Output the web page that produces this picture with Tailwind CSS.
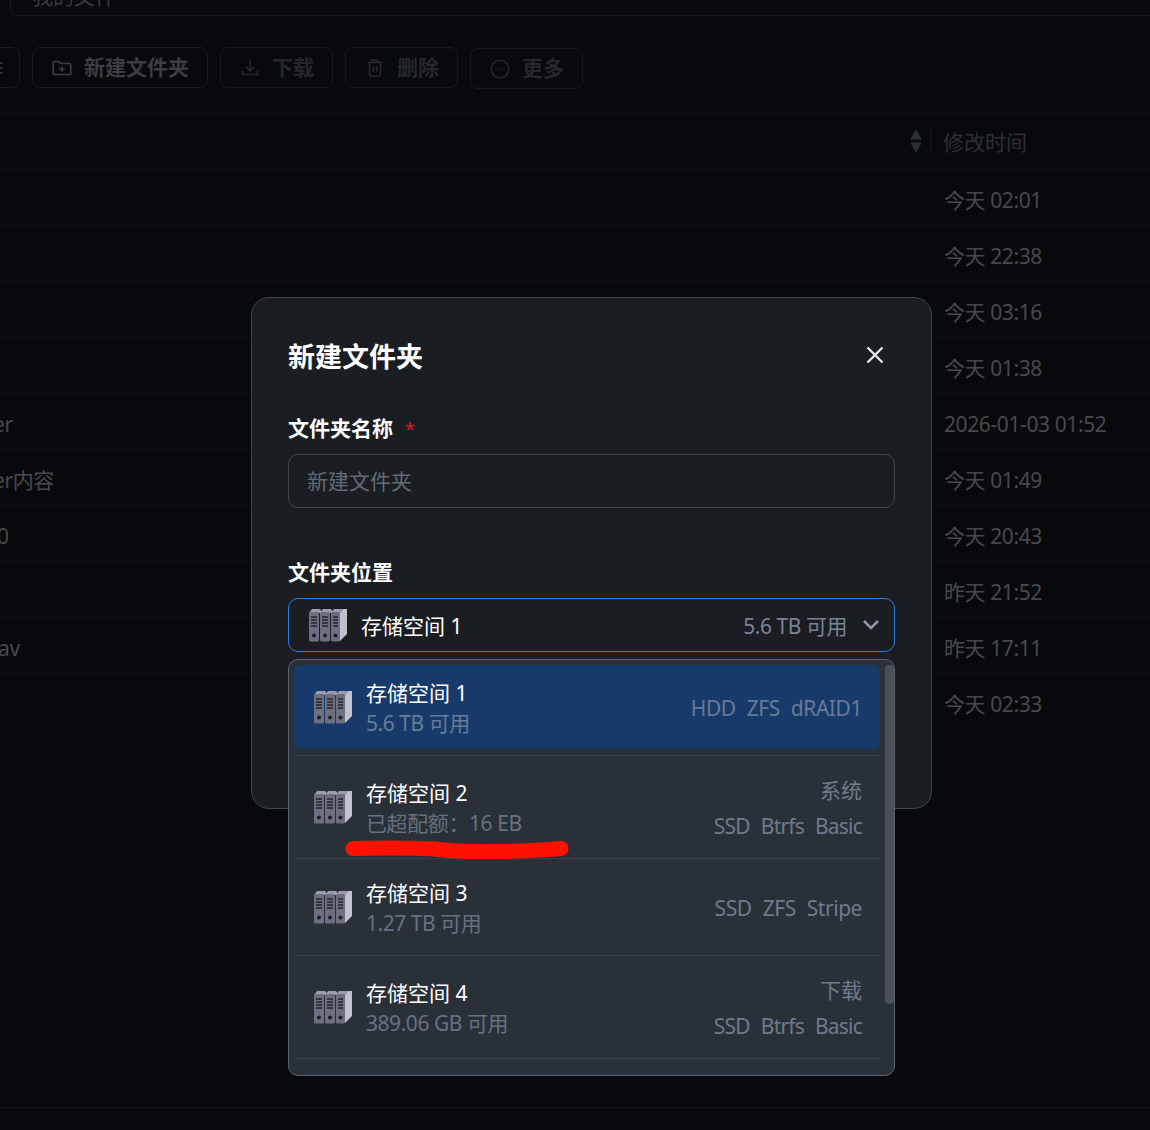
<!DOCTYPE html>
<html lang="zh-CN">
<head>
  <meta charset="UTF-8" />
  <title>新建文件夹</title>
  <script src="https://cdn.jsdelivr.net/npm/@tailwindcss/browser@4"></script>
</head>
<body class="bg-[#08090c] text-white font-['Noto_Sans','Noto_Sans_CJK_SC',sans-serif]">
  <svg class="hidden">
    <symbol id="vol" viewBox="0 0 38 34">
      <path d="M31 5l3-4h4v25l-7 7z" fill="#bfc2cc"/>
      <path d="M0 5l3-4h8l3 4zM11 5l3-4h8l3 4zM22 5l3-4h9l-3 4z" fill="#9a9dab"/>
      <rect x="0" y="4" width="10" height="29.500" rx="1.500" fill="#6c6f80"/>
      <rect x="11" y="4" width="10" height="29.500" rx="1.500" fill="#6c6f80"/>
      <rect x="22" y="4" width="9" height="29.500" rx="1.500" fill="#6c6f80"/>
      <path d="M2 9h6M2 12h6M2 15h6M2 18h6M13 9h6M13 12h6M13 15h6M13 18h6M24 9h5M24 12h5M24 15h5M24 18h5" stroke="#23252e" stroke-width="1.500"/>
      <circle cx="5" cy="27.500" r="2" fill="#1d1f27"/>
      <circle cx="16" cy="27.500" r="2" fill="#1d1f27"/>
      <circle cx="26.500" cy="27.500" r="2" fill="#1d1f27"/>
    </symbol>
  </svg>

  <div class="relative w-[1150px] h-[1130px] overflow-hidden text-[21px]">
    <!-- dimmed page behind the dialog -->
    <div class="h-[1108px] border-b border-[#131418]">
      <div class="ml-[10px] h-[16px] border border-t-0 border-r-0 border-[#17181c] rounded-bl-lg pl-[21px] overflow-hidden">
        <div class="-mt-[18px] text-[#3a3b3e] leading-[28px]">我的文件</div>
      </div>

      <div class="flex gap-3 h-[98px] pt-[31px] -ml-[20px] border-b border-[#101115] text-[21px]">
        <div class="flex items-center justify-end pr-[16px] w-[40px] h-[41px] border border-[#1a1b20] rounded-lg">
          <svg class="w-[4px] h-[14px]" viewBox="0 0 4 14" stroke="#2c2d30" stroke-width="2"><path d="M0 2h4M0 7h4M0 12h4"/></svg>
        </div>
        <div class="flex items-center gap-[11px] w-[176px] h-[41px] pl-[18px] border border-[#1a1b20] rounded-lg font-bold text-[#3c3d40]">
          <svg class="w-[22px] h-[22px]" viewBox="0 0 20 20" fill="none" stroke="#404145" stroke-width="1.400"><path d="M2 5a1 1 0 0 1 1-1h4l2 2h8a1 1 0 0 1 1 1v8a1 1 0 0 1-1 1H3a1 1 0 0 1-1-1zM10 8.500v5M7.500 11h5"/></svg>
          <span class="pt-px">新建文件夹</span>
        </div>
        <div class="flex items-center gap-[11px] w-[113px] h-[41px] pl-[18px] border border-[#17181c] rounded-lg font-bold text-[#25272b]">
          <svg class="w-[22px] h-[22px]" viewBox="0 0 20 20" fill="none" stroke="#26282c" stroke-width="1.400"><path d="M10 3v9M6.500 9l3.500 3.500L13.500 9M3 12v4h14v-4"/></svg>
          <span class="pt-px">下载</span>
        </div>
        <div class="flex items-center gap-[11px] w-[113px] h-[41px] pl-[18px] border border-[#17181c] rounded-lg font-bold text-[#25272b]">
          <svg class="w-[22px] h-[22px]" viewBox="0 0 20 20" fill="none" stroke="#26282c" stroke-width="1.400"><path d="M3 5h14M7.500 5V3h5v2M5 5v11a1.500 1.500 0 0 0 1.500 1.500h7A1.500 1.500 0 0 0 15 16V5M8.500 8.500v5M11.500 8.500v5"/></svg>
          <span class="pt-px">删除</span>
        </div>
        <div class="flex items-center gap-[11px] w-[113px] h-[41px] mt-px pl-[18px] border border-[#17181c] rounded-lg font-bold text-[#25272b]">
          <svg class="w-[22px] h-[22px]" viewBox="0 0 20 20" fill="none" stroke="#26282c" stroke-width="1.400"><circle cx="10" cy="10" r="8"/><path d="M6 10h1M9.500 10h1M13 10h1"/></svg>
          <span class="pt-px">更多</span>
        </div>
      </div>

      <div class="relative h-[56px] flex items-center pl-[943px] pt-[3px] border-b border-[#101115] text-[#2e2f33]">
        <svg class="absolute left-[910px] top-[15px] w-[12px] h-[24px]" viewBox="0 0 12 24" fill="#2b2f37"><path d="M6 1l5 9H1zM6 23l-5-9h10z" stroke="#2b2f37" stroke-linejoin="round"/></svg>
        <div class="absolute left-[930px] top-[15px] w-px h-[25px] bg-[#15161a]"></div>
        修改时间
      </div>
      <div class="h-[56px] flex items-center pl-[944px] pt-[6px] tracking-[-0.4px] border-b border-[#0e0f13] text-[#48494b]">今天 02:01</div>
      <div class="h-[56px] flex items-center pl-[944px] pt-[6px] tracking-[-0.4px] border-b border-[#0e0f13] text-[#48494b]">今天 22:38</div>
      <div class="h-[56px] flex items-center pl-[944px] pt-[6px] tracking-[-0.4px] border-b border-[#0e0f13] text-[#48494b]">今天 03:16</div>
      <div class="h-[56px] flex items-center pl-[944px] pt-[6px] tracking-[-0.4px] border-b border-[#0e0f13] text-[#48494b]">今天 01:38</div>
      <div class="relative h-[56px] flex items-center pl-[944px] pt-[6px] tracking-[-0.4px] border-b border-[#0e0f13] text-[#48494b]"><span class="absolute left-[-7px]">er</span>2026-01-03 01:52</div>
      <div class="relative h-[56px] flex items-center pl-[944px] pt-[6px] tracking-[-0.4px] border-b border-[#0e0f13] text-[#48494b]"><span class="absolute left-[-7px]">er内容</span>今天 01:49</div>
      <div class="relative h-[56px] flex items-center pl-[944px] pt-[6px] tracking-[-0.4px] border-b border-[#0e0f13] text-[#48494b]"><span class="absolute left-[-3px]">0</span>今天 20:43</div>
      <div class="h-[56px] flex items-center pl-[944px] pt-[6px] tracking-[-0.4px] border-b border-[#0e0f13] text-[#48494b]">昨天 21:52</div>
      <div class="relative h-[56px] flex items-center pl-[944px] pt-[6px] tracking-[-0.4px] border-b border-[#0e0f13] text-[#48494b]"><span class="absolute left-[-2px]">av</span>昨天 17:11</div>
      <div class="h-[56px] flex items-center pl-[944px] pt-[6px] tracking-[-0.4px] text-[#48494b]">今天 02:33</div>
    </div>

    <!-- dialog -->
    <div class="absolute left-[251px] top-[297px] w-[681px] h-[512px] bg-[#1a1d22] border border-[#41454d] rounded-[18px] px-[36px]">
      <div class="flex items-center justify-between h-[118px] pr-[2px]">
        <h2 class="text-[27px] font-bold">新建文件夹</h2>
        <svg class="w-[22px] h-[22px] mr-[7px] -mt-[4px]" viewBox="0 0 22 22" fill="none" stroke="#e5e7eb" stroke-width="2.400"><path d="M3.500 3.500l15 15M18.500 3.500l-15 15"/></svg>
      </div>
      <div class="flex items-center h-[28px] -mt-[1px] font-bold">文件夹名称<span class="ml-[12px] font-normal text-[#e0102f] text-[18px]">*</span></div>
      <div class="flex items-center h-[54px] mt-[11px] px-[18px] pt-[2px] border border-[#41454d] rounded-[10px] text-[#646a75]">新建文件夹</div>
      <div class="flex items-center h-[28px] mt-[51px] font-bold">文件夹位置</div>
      <div class="flex items-center gap-[14px] h-[54px] mt-[11px] pl-[20px] pr-[14px] border border-[#2f7ae0] rounded-[10px]">
        <svg class="w-[38px] h-[34px]"><use href="#vol"/></svg>
        <span class="pt-[4px]">存储空间 1</span>
        <span class="ml-auto pt-[4px] tracking-[-0.45px] text-[#7a8494]">5.6 TB 可用</span>
        <svg class="ml-[1px] w-[18px] h-[18px]" viewBox="0 0 18 18" fill="none" stroke="#8d96a5" stroke-width="2.600"><path d="M2 5l7 7 7-7"/></svg>
      </div>
    </div>

    <!-- dropdown -->
    <div class="absolute left-[288px] top-[659px] w-[607px] h-[417px] bg-[#2a3037] border border-[#5b6373] rounded-[10px] overflow-hidden pl-[5px] pt-[5px]">
      <div class="absolute right-0 top-[5px] w-[9px] h-[339px] rounded-[4px] bg-[#4b5058]"></div>
      <div class="w-[586px] h-[91px] border-b border-[#3b4048]">
        <div class="flex items-center h-[84px] pl-[20px] pr-[18px] bg-[#183a6b] rounded-[6px]">
          <svg class="w-[38px] h-[34px]"><use href="#vol"/></svg>
          <div class="ml-[14px] pt-[2px] leading-[30px]"><div>存储空间 1</div><div class="tracking-[-0.45px] text-[#677a96]">5.6 TB 可用</div></div>
          <div class="ml-auto pt-[4px] flex gap-[11px] tracking-[-0.45px] text-[#677a96]"><span>HDD</span><span>ZFS</span><span>dRAID1</span></div>
        </div>
      </div>
      <div class="flex items-center w-[586px] h-[103px] pl-[20px] pr-[18px] border-b border-[#3b4048]">
        <svg class="w-[38px] h-[34px]"><use href="#vol"/></svg>
        <div class="ml-[14px] pt-[2px] leading-[30px]"><div>存储空间 2</div><div class="tracking-[-0.4px] text-[#677080]">已超配额：16 EB</div></div>
        <div class="ml-auto pt-[2px] text-right leading-[36px] text-[#6f7a8c]"><div>系统</div><div class="flex gap-[11px] tracking-[-0.8px]"><span>SSD</span><span>Btrfs</span><span>Basic</span></div></div>
      </div>
      <div class="flex items-center w-[586px] h-[97px] pl-[20px] pr-[18px] border-b border-[#3b4048]">
        <svg class="w-[38px] h-[34px]"><use href="#vol"/></svg>
        <div class="ml-[14px] pt-[2px] leading-[30px]"><div>存储空间 3</div><div class="tracking-[-0.45px] text-[#677080]">1.27 TB 可用</div></div>
        <div class="ml-auto pt-[4px] flex gap-[11px] tracking-[-0.45px] text-[#6f7a8c]"><span>SSD</span><span>ZFS</span><span>Stripe</span></div>
      </div>
      <div class="flex items-center w-[586px] h-[103px] pl-[20px] pr-[18px] border-b border-[#3b4048]">
        <svg class="w-[38px] h-[34px]"><use href="#vol"/></svg>
        <div class="ml-[14px] pt-[2px] leading-[30px]"><div>存储空间 4</div><div class="tracking-[-0.45px] text-[#677080]">389.06 GB 可用</div></div>
        <div class="ml-auto pt-[2px] text-right leading-[36px] text-[#6f7a8c]"><div>下载</div><div class="flex gap-[11px] tracking-[-0.8px]"><span>SSD</span><span>Btrfs</span><span>Basic</span></div></div>
      </div>
    </div>

    <!-- red marker over the quota line -->
    <svg class="absolute left-[345px] top-[840px] w-[224px] h-[19px]" viewBox="0 0 224 19" fill="none"><path d="M8 8.500C40 8 70 7 100 10s70 2 116-1.500" stroke="#ff1000" stroke-width="15" stroke-linecap="round"/></svg>
  </div>
</body>
</html>
